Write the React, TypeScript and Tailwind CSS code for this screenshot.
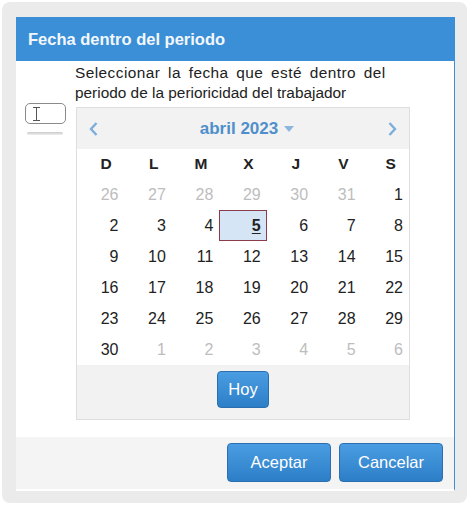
import * as React from "react"

const weekDays = ["D", "L", "M", "X", "J", "V", "S"]

type Day = { n: number; muted?: boolean; selected?: boolean }

function buildMonth(): Day[][] {
  const days: Day[] = []
  for (let n = 26; n <= 31; n++) days.push({ n, muted: true })
  for (let n = 1; n <= 30; n++) days.push({ n, selected: n === 5 })
  for (let n = 1; n <= 6; n++) days.push({ n, muted: true })
  const weeks: Day[][] = []
  for (let i = 0; i < days.length; i += 7) weeks.push(days.slice(i, i + 7))
  return weeks
}

function InputIcon() {
  return (
    <div className="flex flex-col items-center w-[42px]">
      <div className="w-[41px] h-[21px] rounded-[5px] border border-[#8a8a8a] bg-white flex items-center pl-[6px]">
        <svg width="9" height="14" viewBox="0 0 9 14" fill="none" stroke="#555" strokeWidth="1">
          <path d="M1 0.5h7M1 13.5h7M4.5 0.5v13" />
        </svg>
      </div>
      <div className="mt-[8px] w-[36px] h-[3px] rounded-full bg-gradient-to-b from-[#c9c9c9] to-[#f0f0f0]" />
    </div>
  )
}

function Calendar() {
  const weeks = buildMonth()
  return (
    <div className="w-[334px] border border-[#dedede] bg-white">
      <div className="h-[41px] bg-[#f2f2f2] flex items-center justify-between px-[12px]">
        <svg width="9" height="14" viewBox="0 0 9 14" fill="none" stroke="#7eaedb" strokeWidth="2.4">
          <path d="M7.5 1L2 7l5.5 6" />
        </svg>
        <div className="flex items-center gap-[6px] pl-[8px] text-[17px] font-bold text-[#4f8fcb]">
          <span>abril 2023</span>
          <svg width="10" height="6" viewBox="0 0 10 6">
            <path d="M0 0h10L5 6z" fill="#8db6df" />
          </svg>
        </div>
        <svg width="9" height="14" viewBox="0 0 9 14" fill="none" stroke="#7eaedb" strokeWidth="2.4">
          <path d="M1.5 1L7 7l-5.5 6" />
        </svg>
      </div>
      <div className="grid grid-cols-7">
        {weekDays.map((d) => (
          <div key={d} className="h-[30px] flex items-center justify-center pl-[11px] text-[15.5px] font-bold text-[#222]">
            {d}
          </div>
        ))}
      </div>
      {weeks.map((week, wi) => (
        <div key={wi} className="grid grid-cols-7">
          {week.map((day, di) =>
            day.selected ? (
              <div key={di} className="h-[31px] flex items-center justify-end pr-[5px] bg-[#d5e5f5] border border-[#8c3b4b] text-[16px] font-bold text-[#222] underline underline-offset-2">
                {day.n}
              </div>
            ) : (
              <div
                key={di}
                className={`h-[31px] flex items-center justify-end pr-[6px] text-[16px] ${day.muted ? "text-[#bdbdbd]" : "text-[#222]"}`}
              >
                {day.n}
              </div>
            )
          )}
        </div>
      ))}
      <div className="h-[54px] bg-[#f2f2f2] flex justify-center pt-[6px]">
        <button className="w-[52px] h-[37px] rounded-[4px] border border-[#2b6fae] bg-gradient-to-b from-[#4a9de2] to-[#2c7ec7] text-white text-[16.5px]">
          Hoy
        </button>
      </div>
    </div>
  )
}

export default function App() {
  return (
    <div className="w-[470px] h-[506px] bg-white p-[2px]" style={{ fontFamily: '"Liberation Sans", Arial, sans-serif' }}>
      <div className="w-[465px] h-[501px] rounded-[8px] bg-[#ebebeb] pl-[14px] pt-[15px]">
        <div className="w-[439px] h-[474px] flex flex-col">
          <div className="h-[44px] bg-[#3b8fd6] flex items-center pl-[12px] text-[16.5px] font-bold text-[#f2f7fc]">
            Fecha dentro del periodo
          </div>
          <div className="h-[376px] bg-white border-r border-[#3b8fd6] flex pt-[2px]">
            <div className="w-[59px] pl-[8px] pt-[40px]">
              <InputIcon />
            </div>
            <div className="flex flex-col">
              <div className="text-[15.4px] leading-[20px] text-[#222]">
                <p className="whitespace-nowrap tracking-[0.45px] [word-spacing:3px]">
                  Seleccionar la fecha que esté dentro del
                </p>
                <p className="whitespace-nowrap">periodo de la perioricidad del trabajador</p>
              </div>
              <div className="mt-[4px] ml-[1px]">
                <Calendar />
              </div>
            </div>
          </div>
          <div className="h-[54px] bg-[#f4f4f4] border-r border-[#3b8fd6] border-b-2 border-b-white flex justify-end gap-[8px] pt-[6px] pr-[11px]">
            <button className="w-[104px] h-[39px] rounded-[4px] border border-[#2b6fae] bg-gradient-to-b from-[#4a9de2] to-[#2c7ec7] text-white text-[16.5px]">
              Aceptar
            </button>
            <button className="w-[104px] h-[39px] rounded-[4px] border border-[#2b6fae] bg-gradient-to-b from-[#4a9de2] to-[#2c7ec7] text-white text-[16.5px]">
              Cancelar
            </button>
          </div>
        </div>
      </div>
    </div>
  )
}
